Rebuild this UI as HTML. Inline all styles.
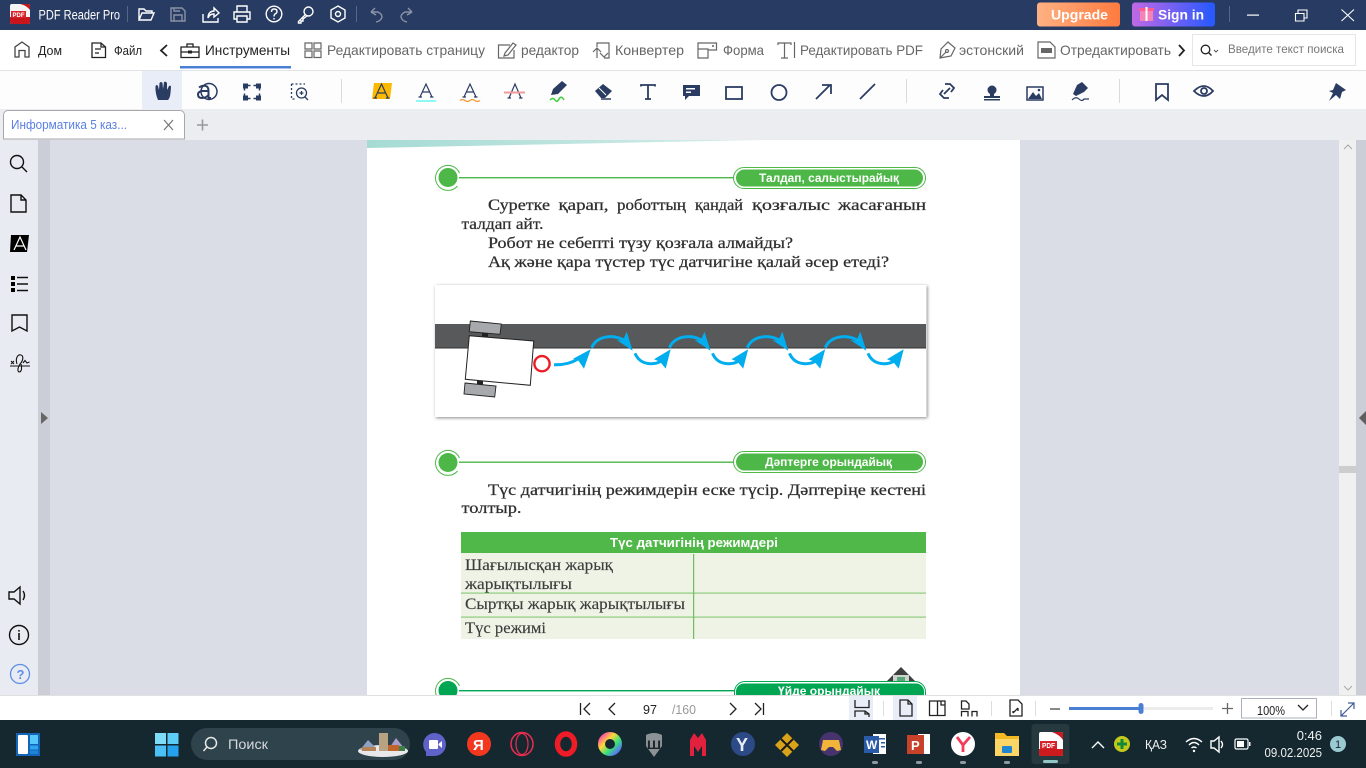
<!DOCTYPE html>
<html lang="ru"><head><meta charset="utf-8"><title>PDF Reader Pro</title>
<style>
html,body{margin:0;padding:0;width:1366px;height:768px;overflow:hidden;background:#dadde6}
svg{display:block;position:absolute;left:0;top:0}
text{font-family:"Liberation Sans","Noto Sans CJK SC",sans-serif}
.c{font-family:"Liberation Serif","DejaVu Serif",serif;fill:#2e2e2e;font-size:15.5px;stroke:#2e2e2e;stroke-width:.25}
.t{font-family:"Liberation Serif","DejaVu Serif",serif;fill:#3c3c3c;font-size:15.5px;stroke:#3c3c3c;stroke-width:.15}
.r{font-size:14px;fill:#666;stroke:none}
.w{fill:none;stroke:#fff;stroke-width:1.4}
.d{fill:none;stroke:#8a93a6;stroke-width:1.4}
.g{fill:none;stroke:#666;stroke-width:1.2}
.k{fill:none;stroke:#222;stroke-width:1.3}
.n{fill:none;stroke:#2b3c62;stroke-width:1.8}
.f{fill:#2b3c62;stroke:none}
.b{fill:none;stroke:#111;stroke-width:1.4}
</style></head><body>
<svg width="1366" height="768" viewBox="0 0 1366 768" xmlns="http://www.w3.org/2000/svg">
<defs>
<linearGradient id="u" x1="0" x2="1"><stop offset="0" stop-color="#ffb183"/><stop offset="1" stop-color="#ff7b3f"/></linearGradient>
<linearGradient id="si" x1="0" x2="1"><stop offset="0" stop-color="#c069e6"/><stop offset="1" stop-color="#2459ff"/></linearGradient>
<linearGradient id="band" x1="0" x2="1"><stop offset="0" stop-color="#a5dbd4"/><stop offset="1" stop-color="#d5ece9"/></linearGradient>
<linearGradient id="rb" x1="0" x2="1" y1="0" y2="1"><stop offset="0" stop-color="#ff4fa0"/><stop offset=".33" stop-color="#ffd83a"/><stop offset=".66" stop-color="#37e07a"/><stop offset="1" stop-color="#5a6cff"/></linearGradient>
<filter id="sh" x="-5%" y="-10%" width="110%" height="120%"><feGaussianBlur stdDeviation="1.5"/></filter>
<g id="low"><path d="M0,0C5,12 18,12 26,8" fill="none" stroke="#00aeef" stroke-width="3"/><path d="M35.7,-4L19,6L25,8.500L30.700,15.300Z" fill="#00aeef"/></g>
<g id="up"><path d="M0,0C5,-12 22,-14 33,-7" fill="none" stroke="#00aeef" stroke-width="3"/><path d="M41,3L35,-16L31,-7L25,-7.700Z" fill="#00aeef"/></g>
</defs>

<!-- backgrounds -->
<rect x="0" y="0" width="1366" height="768" fill="#dadde6"/>
<rect x="0" y="0" width="1366" height="30" fill="#283b62"/>
<rect x="0" y="30" width="1366" height="40" fill="#fff"/>
<rect x="0" y="70" width="1366" height="1.500" fill="#e2e3e6"/>
<rect x="0" y="71" width="1366" height="38" fill="#fdfdfe"/>
<rect x="0" y="109" width="1366" height="31" fill="#ecedf1"/>
<rect x="0" y="140" width="38" height="556" fill="#e9ebf2"/>
<rect x="38" y="140" width="12" height="556" fill="#cbced7"/>
<rect x="1339" y="140" width="17" height="556" fill="#f0f0f0"/>
<rect x="1356" y="140" width="10" height="556" fill="#cbced7"/>

<!-- page -->
<rect x="367" y="140" width="653" height="556" fill="#fff"/>
<path d="M367,140H760L367,148Z" fill="url(#band)"/>

<!-- Section 1 -->
<path d="M459.500,173A12.500,12.500 0 1 0 457.500,186" fill="none" stroke="#4db848" stroke-width="1"/>
<circle cx="448" cy="177.500" r="9.500" fill="#4db848"/>
<rect x="459" y="177" width="276" height="1.400" fill="#4db848"/>
<rect x="733.500" y="167.500" width="192" height="21" rx="10.500" fill="#fff" stroke="#4db848"/>
<rect x="736" y="169.500" width="187" height="17" rx="8.500" fill="#4db848"/>
<text x="759" y="182" textLength="140" lengthAdjust="spacingAndGlyphs" style="font-size:12px;font-weight:bold;fill:#fff">Талдап, салыстырайық</text>

<text class="c" x="488" y="210" textLength="62" lengthAdjust="spacingAndGlyphs">Суретке</text>
<text class="c" x="558.500" y="210" textLength="50" lengthAdjust="spacingAndGlyphs">қарап,</text>
<text class="c" x="617" y="210" textLength="69" lengthAdjust="spacingAndGlyphs">роботтың</text>
<text class="c" x="695" y="210" textLength="48" lengthAdjust="spacingAndGlyphs">қандай</text>
<text class="c" x="752" y="210" textLength="78" lengthAdjust="spacingAndGlyphs">қозғалыс</text>
<text class="c" x="838" y="210" textLength="88" lengthAdjust="spacingAndGlyphs">жасағанын</text>
<text class="c" x="461.500" y="229" textLength="82" lengthAdjust="spacingAndGlyphs">талдап айт.</text>
<text class="c" x="488" y="248" textLength="305" lengthAdjust="spacingAndGlyphs">Робот не себепті түзу қозғала алмайды?</text>
<text class="c" x="488" y="267" textLength="401" lengthAdjust="spacingAndGlyphs">Ақ және қара түстер түс датчигіне қалай әсер етеді?</text>

<!-- Figure -->
<rect x="436" y="286" width="491.500" height="132" fill="#555" opacity=".7" filter="url(#sh)"/>
<rect x="435" y="285" width="491.500" height="132" fill="#fff"/>
<rect x="435" y="324" width="491" height="24" fill="#58595b"/>
<rect x="435" y="347.500" width="491" height="1" fill="#333"/>
<rect x="482" y="331" width="6" height="6" fill="#222"/>
<rect x="477" y="379" width="6" height="6" fill="#222"/>
<path d="M470.300,321L501.300,324L500,334.300L469.300,331.700Z" fill="#a7a9ac" stroke="#222" stroke-width=".9"/>
<path d="M465,383L496,386L494.700,397L464,394Z" fill="#a7a9ac" stroke="#222" stroke-width=".9"/>
<path d="M469.300,335.700L533.700,341L530.300,385.300L465.300,379.300Z" fill="#fff" stroke="#222" stroke-width="1"/>
<circle cx="542" cy="363.700" r="7.600" fill="#fff" stroke="#ed1c24" stroke-width="2.400"/>
<path d="M554,364.700C562,365 570,364 578,359" fill="none" stroke="#00aeef" stroke-width="3"/>
<path d="M590.700,349.300L572.700,359L578,360L584,368.700Z" fill="#00aeef"/>
<use href="#up" x="591.700" y="347.700"/><use href="#up" x="669.500" y="347.700"/><use href="#up" x="747.300" y="347.700"/><use href="#up" x="825.300" y="347.700"/>
<use href="#low" x="635" y="353.300"/><use href="#low" x="712.500" y="353.300"/><use href="#low" x="789.500" y="353.300"/><use href="#low" x="868" y="353.300"/>

<!-- Section 2 -->
<path d="M459.500,458A12.500,12.500 0 1 0 457.500,471" fill="none" stroke="#4db848" stroke-width="1"/>
<circle cx="448" cy="462.500" r="9.500" fill="#4db848"/>
<rect x="459" y="461.500" width="276" height="1.400" fill="#4db848"/>
<rect x="733.500" y="451.500" width="192" height="21" rx="10.500" fill="#fff" stroke="#4db848"/>
<rect x="736" y="453.500" width="187" height="17" rx="8.500" fill="#4db848"/>
<text x="765" y="466" textLength="127" lengthAdjust="spacingAndGlyphs" style="font-size:12px;font-weight:bold;fill:#fff">Дәптерге орындайық</text>

<text class="c" x="488" y="495" textLength="438" lengthAdjust="spacingAndGlyphs">Түс датчигінің режимдерін еске түсір. Дәптеріңе кестені</text>
<text class="c" x="461.500" y="513" textLength="60" lengthAdjust="spacingAndGlyphs">толтыр.</text>

<!-- Table -->
<rect x="461" y="532" width="465" height="21" fill="#4fb848"/>
<rect x="461" y="553" width="465" height="86" fill="#eef3e6"/>
<text x="610" y="547" textLength="168" lengthAdjust="spacingAndGlyphs" style="font-size:13px;font-weight:bold;fill:#fff">Түс датчигінің режимдері</text>
<rect x="461" y="592.500" width="465" height="1.200" fill="#8ecb7e"/>
<rect x="461" y="616.500" width="465" height="1.200" fill="#8ecb7e"/>
<rect x="693" y="554" width="1.200" height="85" fill="#6fbd60"/>
<text class="t" x="465" y="570" textLength="148" lengthAdjust="spacingAndGlyphs">Шағылысқан жарық</text>
<text class="t" x="465" y="589" textLength="107" lengthAdjust="spacingAndGlyphs">жарықтылығы</text>
<text class="t" x="465" y="609" textLength="220" lengthAdjust="spacingAndGlyphs">Сыртқы жарық жарықтылығы</text>
<text class="t" x="465" y="633" textLength="81" lengthAdjust="spacingAndGlyphs">Түс режимі</text>

<!-- Section 3 -->
<path d="M886,682L901,667L916,682V684H886Z" fill="#3f3f3f"/>
<rect x="893" y="675" width="16" height="9" fill="#cfd3cf"/>
<rect x="897" y="677" width="8" height="7" fill="#5aa77c"/>
<path d="M459.500,686A12.500,12.500 0 1 0 457.500,699" fill="none" stroke="#4db848" stroke-width="1"/>
<circle cx="448" cy="690.500" r="9.500" fill="#00a651"/>
<rect x="459" y="690" width="276" height="1.400" fill="#00a651"/>
<rect x="734.500" y="681.500" width="191" height="24" rx="10.500" fill="#fff" stroke="#00a651"/>
<rect x="736" y="683.500" width="188" height="18" rx="8" fill="#00a651"/>
<text x="778" y="695" textLength="102" lengthAdjust="spacingAndGlyphs" style="font-size:12px;font-weight:bold;fill:#fff">Үйде орындайық</text>

<!-- title bar -->
<rect x="10" y="4" width="20" height="20" rx="2" fill="#f4f4f4"/>
<path d="M10,17H30V22a2,2 0 0 1-2,2H12a2,2 0 0 1-2-2Z" fill="#c8141b"/>
<path d="M20,4H28a2,2 0 0 1 2,2V10Q26,5 20,4Z" fill="#c8141b"/>
<rect x="11" y="11" width="15" height="7" fill="#d8232a"/>
<text x="12.500" y="17" textLength="12" lengthAdjust="spacingAndGlyphs" style="font-size:6px;font-weight:bold;fill:#fff">PDF</text>
<text x="38.500" y="19.500" textLength="81.500" lengthAdjust="spacingAndGlyphs" style="font-size:13.500px;fill:#fff">PDF Reader Pro</text>
<rect x="127" y="6" width="1" height="16" fill="#55668a"/>
<g transform="translate(0,-1)">
<path class="w" d="M139,21V10H144L146,12H152V14M139,21L142,14H154L151,21Z"/>
<path class="d" d="M171,9H182L185,12V22H171ZM174,22V16H182V22M174,9V12H180"/>
<path class="w" d="M203,15V23H218V19M208,19C208,14 211,12 214,12V9L219,14L214,18V15C211,15 209,16 208,19Z"/>
<path class="w" d="M237,13V7H247V13M237,20H234V13H250V20H247M237,17H247V23H237Z"/>
<circle class="w" cx="274" cy="15" r="7.800"/><path class="w" d="M271.500,13Q271.500,10 274,10Q277,10 277,12.500Q277,14 275,15Q274,16 274,17.500M274,19V20.500"/>
<circle class="w" cx="308.500" cy="12.500" r="4.500"/><path class="w" d="M305.500,15.500L298.500,22.500V24H301V22H303V20L307,17"/>
<path class="w" d="M338,7L345,11V19L338,23L331,19V11Z"/><circle class="w" cx="338" cy="15" r="2.500"/>
</g>
<rect x="356" y="6" width="1" height="16" fill="#55668a"/>
<path class="d" d="M371,12L375,8M371,12L376,15M371,12H378Q382,14 382,17Q381,21 376,22"/>
<path class="d" d="M412,12L408,8M412,12L407,15M412,12H405Q401,14 401,17Q402,21 407,22"/>

<rect x="1037" y="2.500" width="83" height="24" rx="3" fill="url(#u)"/>
<text x="1051" y="19.500" textLength="57" lengthAdjust="spacingAndGlyphs" style="font-size:13.500px;font-weight:bold;fill:#fff">Upgrade</text>
<rect x="1132" y="2.500" width="83" height="24" rx="3" fill="url(#si)"/>
<rect x="1140" y="9" width="13" height="12" fill="#f583b5"/><rect x="1139" y="8" width="15" height="3" fill="#ff5b8d"/><rect x="1145.500" y="7" width="2" height="14" fill="#fff"/>
<text x="1158" y="19.500" textLength="46" lengthAdjust="spacingAndGlyphs" style="font-size:13.500px;font-weight:bold;fill:#fff">Sign in</text>
<rect x="1229" y="6" width="1" height="16" fill="#55668a"/>
<rect x="1247" y="14.500" width="12" height="1.200" fill="#fff"/>
<path class="w" style="stroke-width:1.100" d="M1295.500,13.500H1304V21H1295.500ZM1298,13V10H1307V18H1304.500"/>
<path class="w" style="stroke-width:1.100" d="M1341.500,9.500L1354,21M1354,9.500L1341.500,21"/>

<!-- ribbon -->
<path d="M15,57V47L22,42L29,47V57H25V50.500H19V57Z" fill="none" stroke="#444" stroke-width="1.300"/>
<text x="38" y="55" textLength="24" lengthAdjust="spacingAndGlyphs" style="font-size:13px;fill:#222">Дом</text>
<path class="k" d="M92,43H101L105.500,47V57.500H92ZM101,43V47H105.500M95,49H101M95,53H99"/>
<text x="114" y="55" textLength="28" lengthAdjust="spacingAndGlyphs" style="font-size:13px;fill:#222">Файл</text>
<path d="M167,45L161,50.500L167,56" fill="none" stroke="#222" stroke-width="1.800"/>
<path class="k" d="M181,47H199V57.500H181ZM181,52H199M187,47V44H193V47"/><rect x="188" y="50.500" width="4" height="3" fill="#222"/>
<text x="205" y="55" textLength="85" lengthAdjust="spacingAndGlyphs" style="font-size:14px;fill:#222">Инструменты</text>
<rect x="180" y="66" width="111" height="2.500" fill="#4a7fd6"/>
<path class="g" d="M305,43H312V49H305ZM314,43H321V49H314ZM305,51H312V57.500H305ZM314,51H321V57.500H314Z"/>
<text class="r" x="327" y="55" textLength="158" lengthAdjust="spacingAndGlyphs">Редактировать страницу</text>
<path class="g" d="M510,45H498.500V58H514V50M505,53L513,43L516,45L508,55L504,56Z"/>
<text class="r" x="521" y="55" textLength="58" lengthAdjust="spacingAndGlyphs">редактор</text>
<path class="g" d="M597,47V43H609V58H604M593,52L597,48L601,52M597,48V58M608,53L604,57L600,53"/>
<text class="r" x="615" y="55" textLength="69" lengthAdjust="spacingAndGlyphs">Конвертер</text>
<path class="g" d="M698,43H716.500V50H708V58H698ZM698,49H708V50"/><rect x="712" y="45" width="2" height="2" fill="#888"/>
<text class="r" x="723" y="55" textLength="41" lengthAdjust="spacingAndGlyphs">Форма</text>
<path class="g" d="M778,45V43H791V45M784.500,43V58M781,58H788M794.500,42V58"/>
<text class="r" x="800" y="55" textLength="123" lengthAdjust="spacingAndGlyphs">Редактировать PDF</text>
<path class="g" d="M948,42L955,48L951,56L940,58L941,49ZM940,58L946,52"/><circle class="g" cx="947" cy="51" r="1.500"/>
<text class="r" x="959" y="55" textLength="65" lengthAdjust="spacingAndGlyphs">эстонский</text>
<path class="g" d="M1038,42H1050L1055,47V58H1038Z"/><rect x="1041" y="48" width="11" height="5" fill="#666"/>
<text class="r" x="1060" y="55" textLength="111" lengthAdjust="spacingAndGlyphs">Отредактировать</text>
<path d="M1179,45L1184,50.500L1179,56" fill="none" stroke="#222" stroke-width="1.800"/>
<rect x="1192.500" y="34.500" width="163" height="31" fill="#fff" stroke="#e6e6e6"/>
<circle class="k" cx="1205.500" cy="49.500" r="4.300"/><path class="k" d="M1208.500,52.500L1211.500,55.500"/><path d="M1214,50L1216,52L1218,50" fill="none" stroke="#555"/>
<text x="1228" y="53" textLength="116" lengthAdjust="spacingAndGlyphs" style="font-size:12px;fill:#777">Введите текст поиска</text>

<!-- tool row -->
<rect x="142" y="71" width="40" height="38" fill="#e8edf8"/>
<path class="f" d="M158,100Q155,93 155.500,86Q157,84 158,86L159,90L159.500,83Q161,81 162.500,83L163,89L164,82Q166,81 167,83L167,90L169,86Q171,85 171,87L170.500,93Q170,98 168,100Z"/>
<circle class="n" style="stroke-width:1.500" cx="209" cy="91.500" r="8"/>
<path class="n" style="stroke-width:2" d="M199,87.500Q203,84.500 207,86.500Q208.500,88 208.500,91V98H211M208.500,91H202.500Q198,91.500 198,94.500Q198,98 202,98Q206,98 208.500,95"/>
<path class="n" style="stroke-width:1.500;stroke-dasharray:2.500 3" d="M248,85.500H257M248,98.500H257M244.500,88V96M259.500,88V96"/>
<rect class="f" x="243" y="83.500" width="5" height="5"/><rect class="f" x="256" y="83.500" width="5" height="5"/><rect class="f" x="243" y="95.500" width="5" height="5"/><rect class="f" x="256" y="95.500" width="5" height="5"/>
<path class="n" style="stroke-width:1.300;stroke-dasharray:2 2" d="M291.500,84H305M291.500,84V99H296"/>
<circle class="n" style="stroke-width:1.300" cx="301.500" cy="93" r="5"/><path class="n" style="stroke-width:1.300" d="M299.500,93H303.500M301.500,91V95M305,97L308,100"/>
<rect x="341" y="79" width="1" height="24" fill="#d9dadd"/>

<path d="M374,83H392L390,99H372Z" fill="#fbb900"/>
<path class="n" style="stroke-width:1.200" d="M375,98L381.500,84L388,98M378,93H385M373.500,98H377M386,98H389.500"/>
<path class="n" style="stroke-width:1.200" d="M420,97L426,84L432,97M422.500,92H429.500M418.500,97H422M430,97H433.500"/><rect x="416" y="100" width="20" height="2" fill="#8ef8f4"/>
<path class="n" style="stroke-width:1.200" d="M464,97L470,84L476,97M466.500,92H473.500M462.500,97H466M474,97H477.500"/><path d="M460,100.500q2.500-2 5,0t5,0t5,0t5,0" fill="none" stroke="#f39a35" stroke-width="1.300"/>
<path class="n" style="stroke-width:1.200" d="M509,98L515,84L521,98M507.500,98H511M519,98H522.500"/><rect x="504" y="91.500" width="21" height="2" fill="#f39a9a"/>
<path class="f" d="M551,95L553,89L562,81L567,85L558,94Z"/><path d="M550,100q3-3 5,0t4-1t5,1" fill="none" stroke="#3dce3d" stroke-width="1.500"/>
<path class="f" d="M595,91L603,84L612,91L605,98H601Z"/><path d="M599,88L606,95" stroke="#fff" stroke-width="1"/><path d="M601,99H611" stroke="#2b3c62" stroke-width="1.500"/>
<path class="n" d="M641,86.500V85H655V86.500M648,85V99M645,99H651"/>
<path class="f" d="M683,85H700V96H689L685,100V96H683Z"/><rect x="686" y="88" width="9" height="1.500" fill="#fff"/><rect x="686" y="91.500" width="5" height="1.500" fill="#fff"/>
<rect class="n" x="726" y="87" width="16" height="12"/>
<ellipse class="n" cx="779" cy="92.500" rx="7.500" ry="7.500"/>
<path class="n" d="M816,99L830,85M822,85H831V94"/>
<path class="n" d="M860,99L875,84"/>
<rect x="906" y="79" width="1" height="24" fill="#d9dadd"/>
<path class="n" d="M945,84L950,84L954,88L951,92M949,98L944,98L940,94L943,90M944,94L950,88"/>
<circle class="f" cx="992" cy="90" r="4.500"/><rect class="f" x="990" y="93" width="4" height="4"/><rect class="f" x="984" y="96" width="16" height="2"/><rect class="f" x="984" y="99" width="16" height="1.500"/>
<rect class="n" style="stroke-width:1.500" x="1027" y="87" width="16" height="13"/><path class="f" d="M1028,99L1033,92L1036,96L1039,93L1042,99Z"/><circle cx="1039" cy="90" r="1.300" fill="#2b3c62"/>
<path class="f" d="M1073,94L1077,85L1082,82L1088,88L1084,92L1076,96Z"/><path class="n" style="stroke-width:1.200" d="M1072,100Q1076,96 1079,99T1084,99H1089"/>
<rect x="1119" y="79" width="1" height="24" fill="#d9dadd"/>
<path class="n" d="M1156,84H1168V100L1162,95L1156,100Z"/>
<path class="n" d="M1194,91Q1204,81 1213,91Q1204,101 1194,91Z"/><circle class="n" cx="1204" cy="91" r="3"/>
<path class="f" d="M1336,83L1346,90L1342,92L1340,99L1336,95L1329,101L1333,93L1329,91L1333,90Z"/>

<!-- tab -->
<path d="M3.500,139V115a4.500,4.500 0 0 1 4.500-4.500H180a4.500,4.500 0 0 1 4.500,4.500V139Z" fill="#fff" stroke="#a8a8ac"/>
<text x="11" y="129" textLength="116" lengthAdjust="spacingAndGlyphs" style="font-size:13px;fill:#5a7fe3">Информатика 5 каз...</text>
<path d="M164,120L173,130M173,120L164,130" fill="none" stroke="#777" stroke-width="1.200"/>
<path d="M197,125H208M202.500,119.500V130.500" fill="none" stroke="#999" stroke-width="1.600"/>

<!-- left sidebar -->
<circle class="b" cx="17" cy="162" r="6.500"/><path class="b" d="M22,167L27,172"/>
<path class="b" d="M11,195H21L26,200V212H11ZM21,195V200H26"/>
<path d="M11,235H29L27,252H10Z" fill="#000"/><path d="M14,250L20,237L26,250M16,246H24" fill="none" stroke="#fff" stroke-width="1.200"/>
<rect x="11" y="276" width="4" height="4" fill="#000"/><rect x="11" y="282" width="4" height="4" fill="#000"/><rect x="11" y="288" width="4" height="4" fill="#000"/>
<path class="b" d="M17,277.500H28M17,284H28M17,290.500H28"/>
<path class="b" d="M12,315H27V331L19.500,327L12,331Z"/>
<path class="b" style="stroke-width:1.100" d="M10,366H30M11,361L14,364M14,361L11,364M17,364C15,358 18,354 21,355C24,356 23,361 20,364C18,367 17,371 19,372C22,372 22,367 21,364M23,363L25,360.500L27,363L29.500,362"/>
<path class="b" d="M9,592H14L20,587V604L14,599H9Z"/><path class="b" d="M23,591Q26,595 23,600"/>
<circle class="b" cx="19" cy="635" r="9.500"/><rect x="18.200" y="633" width="1.600" height="7" fill="#111"/><rect x="18.200" y="630" width="1.600" height="1.600" fill="#111"/>
<circle cx="20" cy="674" r="9.500" fill="none" stroke="#5b8ee8" stroke-width="1.300"/>
<text x="16.500" y="679" style="font-size:13px;font-weight:bold;fill:#5b8ee8">?</text>
<path d="M41,412L48,418L41,424Z" fill="#666"/>

<!-- right side -->
<path d="M1344,149L1348,145L1352,149" fill="none" stroke="#aaa" stroke-width="1"/>
<path d="M1344,686L1348,690L1352,686" fill="none" stroke="#aaa" stroke-width="1"/>
<rect x="1339" y="466" width="17" height="7" fill="#cdcdcd"/>
<path d="M1366,411L1359,418L1366,425Z" fill="#5f5f5f"/>

<!-- status bar -->
<rect x="0" y="695" width="1366" height="25" fill="#fff"/>
<rect x="0" y="695" width="1366" height="1" fill="#e0e0e0"/>
<rect x="849" y="696" width="24" height="24" fill="#e8edf8"/>
<rect x="893" y="696" width="24" height="24" fill="#e8edf8"/>
<path class="k" d="M580.500,703V715M590,703L584,709L590,715"/>
<path class="k" d="M615,703L609,709L615,715"/>
<text x="643" y="714" textLength="14" lengthAdjust="spacingAndGlyphs" style="font-size:12.500px;fill:#222">97</text>
<text x="672" y="714" textLength="24" lengthAdjust="spacingAndGlyphs" style="font-size:12.500px;fill:#999">/160</text>
<path class="k" d="M730,703L736,709L730,715"/>
<path class="k" d="M755,703L761,709L755,715M763.500,703V715"/>
<path class="k" d="M855,700V707.500H869V700M855,717V711H865L869,714V717M865,711V714H869"/>
<rect x="883" y="701" width="1" height="15" fill="#ddd"/>
<path class="k" d="M900,700H908L912,704V716H900ZM908,700V704H912"/>
<path class="k" d="M929.500,701H945V715.500H929.500ZM937.500,701V715.500M941,701V705H945"/>
<path class="k" d="M961.500,701H966L969,704V709H961.500ZM961.500,716.500V711.500H968V716.500M972,716.500V711.500H977V716.500"/>
<rect x="991" y="701" width="1" height="15" fill="#ddd"/>
<path class="k" d="M1010,700H1018L1022,704V716H1010ZM1013,713L1018,708M1013,713V711M1018,708V711"/>
<rect x="1035" y="701" width="1" height="15" fill="#ddd"/>
<rect x="1050" y="708" width="10" height="2" fill="#888"/>
<rect x="1069" y="707" width="144" height="3" fill="#ececec"/>
<rect x="1069" y="707" width="72" height="3" fill="#4a7fd6"/>
<rect x="1138.500" y="703" width="5" height="11" rx="2.500" fill="#4a7fd6"/>
<path d="M1222,708.500H1233M1227.500,703V714" stroke="#666" stroke-width="1.300"/>
<rect x="1241.500" y="698.500" width="75" height="19.500" fill="#fff" stroke="#aab0bd"/>
<text x="1257" y="715" textLength="28" lengthAdjust="spacingAndGlyphs" style="font-size:12.500px;fill:#222">100%</text>
<path class="k" d="M1298,705L1303,710L1308,705"/>
<rect x="1331" y="701" width="1" height="15" fill="#ddd"/>
<path d="M1341,716L1354,703M1348,703H1354V709M1341,710V716H1347" fill="none" stroke="#3d5a96" stroke-width="1.200"/>

<!-- taskbar -->
<rect x="0" y="720" width="1366" height="48" fill="#15282f"/>
<rect x="16" y="733" width="24" height="23" fill="#1465b8"/>
<rect x="18" y="735" width="10" height="19" rx="1" fill="#fff"/>
<rect x="30" y="735" width="8" height="9" fill="#56c8fa"/><rect x="30" y="745.500" width="8" height="4" fill="#2ea5ee"/><rect x="30" y="750.500" width="8" height="3.500" fill="#1b86d9"/>
<rect x="155" y="733" width="11" height="11" fill="#7fdcf7"/><rect x="167.500" y="733" width="11" height="11" fill="#5ccdf7"/>
<rect x="155" y="745.500" width="11" height="11" fill="#4bc0f5"/><rect x="167.500" y="745.500" width="11" height="11" fill="#23a3ee"/>
<rect x="191" y="728" width="219" height="32" rx="16" fill="#2e434b"/>
<circle cx="211" cy="743" r="5.500" fill="none" stroke="#e8e8e8" stroke-width="1.500"/><path d="M207,747L203.500,751" stroke="#e8e8e8" stroke-width="1.500"/>
<text x="228" y="749" textLength="40" lengthAdjust="spacingAndGlyphs" style="font-size:14px;fill:#d5dadc">Поиск</text>
<ellipse cx="383" cy="751" rx="25" ry="6" fill="#e8e8ea"/>
<path d="M360,750L368,740L376,748Z" fill="#8fa0c0"/><path d="M388,750L396,738L404,748Z" fill="#a89ccb"/>
<rect x="379" y="745" width="20" height="6" fill="#c0642e"/>
<rect x="379" y="733" width="9" height="18" fill="#b8a282"/><rect x="399" y="746" width="6" height="5" fill="#3e7f48"/><rect x="362" y="747" width="14" height="4" fill="#b48458"/>

<path d="M434.500,733a11.500,11.500 0 0 1 0,23H426V752A11.500,11.500 0 0 1 434.500,733Z" fill="#5e62c9"/>
<rect x="429" y="740" width="9" height="9" rx="1" fill="#fff"/><path d="M438.500,744L442,741V748L438.500,745Z" fill="#fff"/>
<circle cx="479" cy="744" r="12" fill="#f4381f"/>
<text x="473" y="750" style="font-size:15px;font-weight:bold;fill:#fff">Я</text>
<ellipse cx="522" cy="744" rx="11" ry="11.500" fill="none" stroke="#ec2c52" stroke-width="1.500"/><ellipse cx="522" cy="744" rx="6" ry="10.500" fill="none" stroke="#ec2c52" stroke-width="1.200"/>
<ellipse cx="566" cy="744" rx="8.500" ry="10" fill="none" stroke="#ee1c26" stroke-width="5.500"/>
<circle cx="610" cy="744" r="8.500" fill="none" stroke="url(#rb)" stroke-width="7"/>
<path d="M646,735Q654,731 662,735V746L654,757L646,746Z" fill="#8d9296"/>
<text x="647" y="749" textLength="14" lengthAdjust="spacingAndGlyphs" style="font-size:12px;font-weight:bold;fill:#1c2428">Ш</text>
<path d="M690,756V740L694,733L698,738L702,733L706,740V756H702V746L698,752L694,746V756Z" fill="#e2213f"/>
<circle cx="743" cy="744" r="12" fill="#2c4a85"/>
<text x="736" y="751" style="font-size:18px;font-weight:bold;fill:#e8eef8">Y</text>
<path d="M787,733L799,745L787,757L775,745Z" fill="#d8a21b"/><path d="M781,739L793,751M793,739L781,751" stroke="#1a1a1a" stroke-width="2"/>
<circle cx="831" cy="744" r="12" fill="#47336d"/>
<path d="M823,740H839L841,750L837,751L833,747H829L825,751L821,750Z" fill="#f3b43a"/>
<rect x="873" y="734" width="13" height="20" fill="#fff"/><rect x="864" y="736" width="15" height="17" fill="#2a5ba8"/>
<text x="866" y="749" style="font-size:12px;font-weight:bold;fill:#fff">W</text>
<rect x="875" y="738" width="10" height="1.500" fill="#2a5ba8"/><rect x="881" y="742" width="4" height="1.500" fill="#2a5ba8"/><rect x="881" y="746" width="4" height="1.500" fill="#2a5ba8"/>
<rect x="918" y="734" width="12" height="20" fill="#fff"/><rect x="907" y="735" width="17" height="19" fill="#c8412a"/>
<text x="911" y="750" style="font-size:13px;font-weight:bold;fill:#fff">P</text>
<circle cx="963" cy="744" r="12" fill="#fff"/>
<path d="M957,737L963,745L970,737M963,745V752" fill="none" stroke="#f43a5a" stroke-width="2.800"/>
<path d="M995,733H1004L1007,736H1019V755H995Z" fill="#f2b922"/><rect x="995" y="739" width="24" height="17" fill="#fbd565"/>
<rect x="1002" y="746" width="10" height="7" rx="1" fill="#1f86d1"/>
<rect x="1031.500" y="724" width="38" height="40" rx="3" fill="#26393f"/>
<rect x="1039" y="732" width="24" height="24" rx="2" fill="#fff"/>
<path d="M1039,749H1063V754a2,2 0 0 1-2,2H1041a2,2 0 0 1-2-2Z" fill="#cc1a1f"/>
<path d="M1052,732H1061a2,2 0 0 1 2,2V740Q1060,735 1052,732Z" fill="#cc1a1f"/>
<rect x="1040" y="741" width="17" height="8" fill="#d8232a"/>
<text x="1042" y="748" textLength="13" lengthAdjust="spacingAndGlyphs" style="font-size:7px;font-weight:bold;fill:#fff">PDF</text>
<rect x="1043" y="760" width="15" height="3" rx="1.500" fill="#8fc7c9"/>
<rect x="872" y="761" width="6" height="3" rx="1.500" fill="#8f999d"/><rect x="916" y="761" width="6" height="3" rx="1.500" fill="#8f999d"/><rect x="960" y="761" width="6" height="3" rx="1.500" fill="#8f999d"/><rect x="1004" y="761" width="6" height="3" rx="1.500" fill="#8f999d"/>
<path class="w" d="M1092,748L1098,742L1104,748"/>
<circle cx="1122" cy="744" r="8" fill="#c3c81e"/><path d="M1117,744H1127M1122,739V749" stroke="#128a35" stroke-width="3"/>
<text x="1145" y="749" textLength="22" lengthAdjust="spacingAndGlyphs" style="font-size:12.500px;fill:#f0f0f0">ҚАЗ</text>
<path class="w" d="M1186,742Q1194,735 1202,742M1189,745Q1194,740 1199,745M1191.500,748Q1194,746 1196.500,748"/><circle cx="1194" cy="751" r="1.200" fill="#fff"/>
<path class="w" d="M1211,741H1214L1219,737V752L1214,748H1211Z"/><path class="w" d="M1221,741Q1224,744.500 1221,748"/>
<rect x="1235" y="739" width="13" height="10" rx="1.500" fill="none" stroke="#fff" stroke-width="1.200"/><rect x="1237" y="741" width="7" height="6" fill="#fff"/><rect x="1249" y="742" width="1.500" height="4" fill="#fff"/>
<text x="1322" y="740" text-anchor="end" style="font-size:13px;fill:#f0f0f0">0:46</text>
<text x="1264.500" y="757" textLength="57.500" lengthAdjust="spacingAndGlyphs" style="font-size:13px;fill:#f0f0f0">09.02.2025</text>
<circle cx="1338" cy="744" r="8" fill="#9ccad3"/>
<text x="1335" y="748" style="font-size:11px;fill:#14272e">1</text>
</svg>
</body></html>
